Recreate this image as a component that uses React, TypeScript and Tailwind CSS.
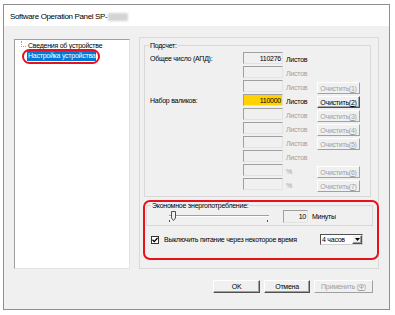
import React from "react";

type Row = {
  label?: string;
  value?: string;
  unit: string;
  unitOn?: boolean;
  yellow?: boolean;
  btn?: string;
  btnOn?: boolean;
};

const rows: Row[] = [
  { label: "Общее число (АПД):", value: "110276", unit: "Листов", unitOn: true },
  { unit: "Листов" },
  { unit: "Листов", btn: "1" },
  { label: "Набор валиков:", value: "110000", unit: "Листов", unitOn: true, yellow: true, btn: "2", btnOn: true },
  { unit: "Листов", btn: "3" },
  { unit: "Листов", btn: "4" },
  { unit: "Листов", btn: "5" },
  { unit: "Листов" },
  { unit: "%", btn: "6" },
  { unit: "%", btn: "7" },
];

function Btn({ children, on = true, className = "" }: { children: React.ReactNode; on?: boolean; className?: string }) {
  return (
    <div
      className={`flex items-center justify-center border bg-[#f0f0f0] border-t-white border-l-white ${
        on
          ? "border-r-[#505050] border-b-[#505050] shadow-[inset_-1px_-1px_0_#a0a0a0] text-black"
          : "border-r-[#a0a0a0] border-b-[#a0a0a0] text-[#a0a0a0]"
      } ${className}`}
    >
      {children}
    </div>
  );
}

function Tree() {
  return (
    <div className="mt-[2px] w-[116px] h-[230px] bg-white border border-t-[#a0a0a0] border-l-[#a0a0a0] border-r-[#e3e3e3] border-b-[#e3e3e3] pt-[1px]">
      <div className="flex h-[9px] items-center">
        <span className="ml-[6px] w-[5px] h-[6px] self-start border-l border-b border-dotted border-[#a0a0a0]" />
        <span className="ml-[2px]">Сведения об устройстве</span>
      </div>
      <div className="flex h-[11px] items-center">
        <span className="relative ml-[12px] px-[1px] h-[10px] leading-[10px] bg-[#0078d7] text-white">
          Настройка устройства
          <span className="absolute -left-[5px] -right-[4px] -top-[2px] -bottom-[3px] border-2 border-[#e8101a] rounded-[8px]" />
        </span>
      </div>
    </div>
  );
}

function Counters() {
  return (
    <fieldset className="ml-[4px] mt-[3px] w-[227px] border border-[#d8d8d8] pl-[5px] pr-[9px] pt-[1px] pb-[5px]">
      <legend className="-ml-[1px] px-[1px]">Подсчет:</legend>
      {rows.map((r, i) => (
        <div key={i} className="flex h-[14px] items-center">
          <span className="w-[93px]">{r.label}</span>
          <div
            className={`w-[40px] h-[12px] leading-[11px] pr-[1px] text-right border border-t-[#a0a0a0] border-l-[#a0a0a0] border-r-[#e3e3e3] border-b-[#e3e3e3] ${
              r.yellow ? "bg-[#ffd200]" : "bg-[#f0f0f0]"
            }`}
          >
            {r.value}
          </div>
          <span className={`ml-[3px] w-[31px] mt-[2px] ${r.unitOn ? "text-black" : "text-[#a0a0a0]"}`}>{r.unit}</span>
          {r.btn && (
            <Btn on={!!r.btnOn} className="w-[43px] h-[12px] mt-[4px]">
              Очистить(<span className="underline">{r.btn}</span>)
            </Btn>
          )}
        </div>
      ))}
    </fieldset>
  );
}

function Power() {
  return (
    <div className="ml-[3px] mt-[3px] w-[236px] h-[60px] border-2 border-[#e8101a] rounded-[7px]">
      <fieldset className="ml-[1px] w-[227px] border border-[#d8d8d8] pl-[20px] pb-[2px]">
        <legend className="ml-[-16px] px-[1px] leading-[7px]">Экономное энергопотребление:</legend>
        <div className="flex h-[14px] items-center">
          <div className="relative w-[102px] h-[14px]">
            <div className="absolute left-[2px] right-0 top-[6px] h-[2px] border-t border-t-[#a0a0a0] border-b border-b-white" />
            <svg className="absolute left-[4px] top-[2px]" width="5" height="10" viewBox="0 0 5 10">
              <path d="M0.5 0.5 H4.5 V7 L2.5 9.5 L0.5 7 Z" fill="#f0f0f0" stroke="#505050" strokeWidth="1" />
            </svg>
            <div className="absolute left-[2px] top-[11px] w-[1px] h-[2px] bg-[#505050]" />
            <div className="absolute left-[100px] top-[11px] w-[1px] h-[2px] bg-[#505050]" />
          </div>
          <div className="ml-[14px] w-[25px] h-[13px] leading-[12px] pr-[1px] text-right border border-t-[#a0a0a0] border-l-[#a0a0a0] border-r-[#e3e3e3] border-b-[#e3e3e3] bg-[#f0f0f0]">
            10
          </div>
          <span className="ml-[4px]">Минуты</span>
        </div>
      </fieldset>
      <div className="flex items-center mt-[8px] h-[11px]">
        <div className="ml-[6px] w-[8px] h-[8px] border border-[#333] bg-white flex items-center justify-center">
          <svg width="6" height="6" viewBox="0 0 6 6">
            <path d="M0.5 2.8 L2.3 4.6 L5.5 1" fill="none" stroke="#000" strokeWidth="1.3" />
          </svg>
        </div>
        <span className="ml-[5px] w-[156px] whitespace-nowrap">Выключить питание через некоторое время</span>
        <div className="w-[43px] h-[11px] flex border border-t-[#505050] border-l-[#505050] border-r-[#d0d0d0] border-b-[#d0d0d0] bg-white">
          <span className="flex-1 pl-[1px] leading-[9px]">4 часов</span>
          <Btn className="w-[10px] h-[9px]">
            <svg width="5" height="3" viewBox="0 0 5 3">
              <path d="M0 0 H5 L2.5 3 Z" fill="#000" />
            </svg>
          </Btn>
        </div>
      </div>
    </div>
  );
}

export default function App() {
  return (
    <div className="w-[395px] h-[315px] bg-white pt-[4px] pl-[3px] font-['Liberation_Sans',Arial,sans-serif] text-[7px] tracking-[-0.25px] leading-[9px] text-black">
      <div className="w-[387px] h-[306px] border border-[#8f8f8f] bg-[#f0f0f0] flex flex-col">
        <div className="h-[21px] bg-white flex items-center pl-[6px] pt-[2px] text-[8px] tracking-[-0.35px]">
          <span>Software Operation Panel SP-</span>
          <span className="ml-[1px] w-[20px] h-[8px] bg-[#d4d4d4] blur-[1px]" />
        </div>
        <div className="flex pl-[10px] pt-[11px]">
          <Tree />
          <div className="ml-[9px] w-[240px] h-[232px] border border-[#d9d9d9]">
            <Counters />
            <Power />
          </div>
        </div>
        <div className="flex mt-[11px] pl-[209px] gap-[4px]">
          <Btn className="w-[47px] h-[13px]">OK</Btn>
          <Btn className="w-[46px] h-[13px]">Отмена</Btn>
          <Btn on={false} className="w-[59px] h-[13px]">
            Применить (<span className="underline">Ф</span>)
          </Btn>
        </div>
      </div>
    </div>
  );
}
